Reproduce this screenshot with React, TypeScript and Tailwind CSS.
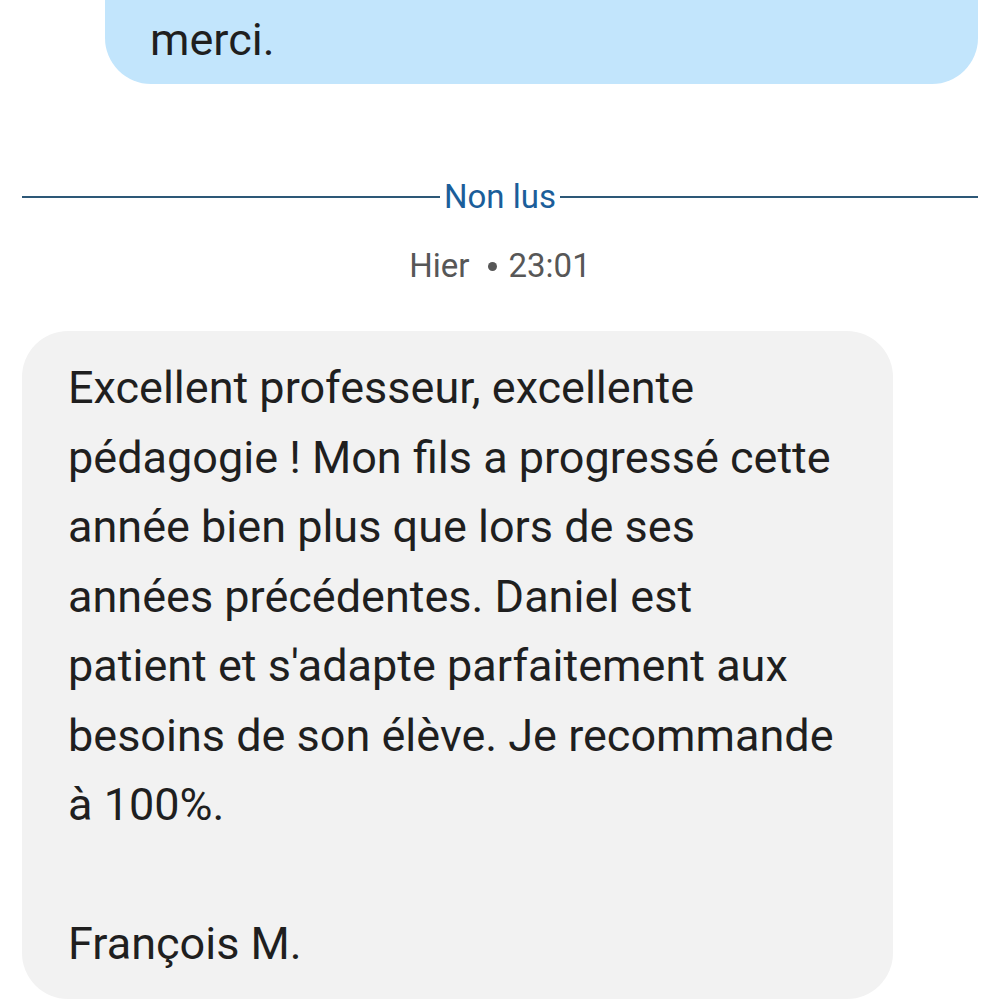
export default function App() {
  return (
    <div className="w-[1000px] h-[1000px] bg-white overflow-hidden font-['Roboto',sans-serif] text-[#1f1f1f]">
      {/* outgoing bubble, cut at top */}
      <div className="ml-[105px] mr-[22px] bg-[#c2e5fc] rounded-b-[46px] pl-[45px] pt-[5px] pb-[9px]">
        <p className="text-[45px] leading-[70px]">merci.</p>
      </div>

      {/* unread divider */}
      <div className="mt-[93px] mx-[22px] flex items-center gap-[4px]">
        <div className="flex-1 h-[2px] bg-[#2d5877]" />
        <span className="text-[33px] leading-[40px] text-[#1b5e9a]">Non lus</span>
        <div className="flex-1 h-[2px] bg-[#2d5877]" />
      </div>

      <div className="mt-[29px] flex justify-center items-center text-[33px] leading-[40px] text-[#575757]">
        <span>Hier</span>
        <span className="ml-[18px] mr-[12px] w-[9px] h-[9px] rounded-full bg-[#575757]" />
        <span>23:01</span>
      </div>

      {/* incoming bubble */}
      <div className="mt-[45px] ml-[22px] w-[871px] bg-[#f2f2f2] rounded-[46px] pl-[46px] pr-[20px] pt-[22px] pb-[20px] text-[45px] leading-[69.5px]">
        <p>
          Excellent professeur, excellente
          <br />
          pédagogie ! Mon fils a progressé cette
          <br />
          année bien plus que lors de ses
          <br />
          années précédentes. Daniel est
          <br />
          patient et s'adapte parfaitement aux
          <br />
          besoins de son élève. Je recommande
          <br />à 100%.
        </p>
        <p className="mt-[69.5px]">François M.</p>
      </div>
    </div>
  );
}
